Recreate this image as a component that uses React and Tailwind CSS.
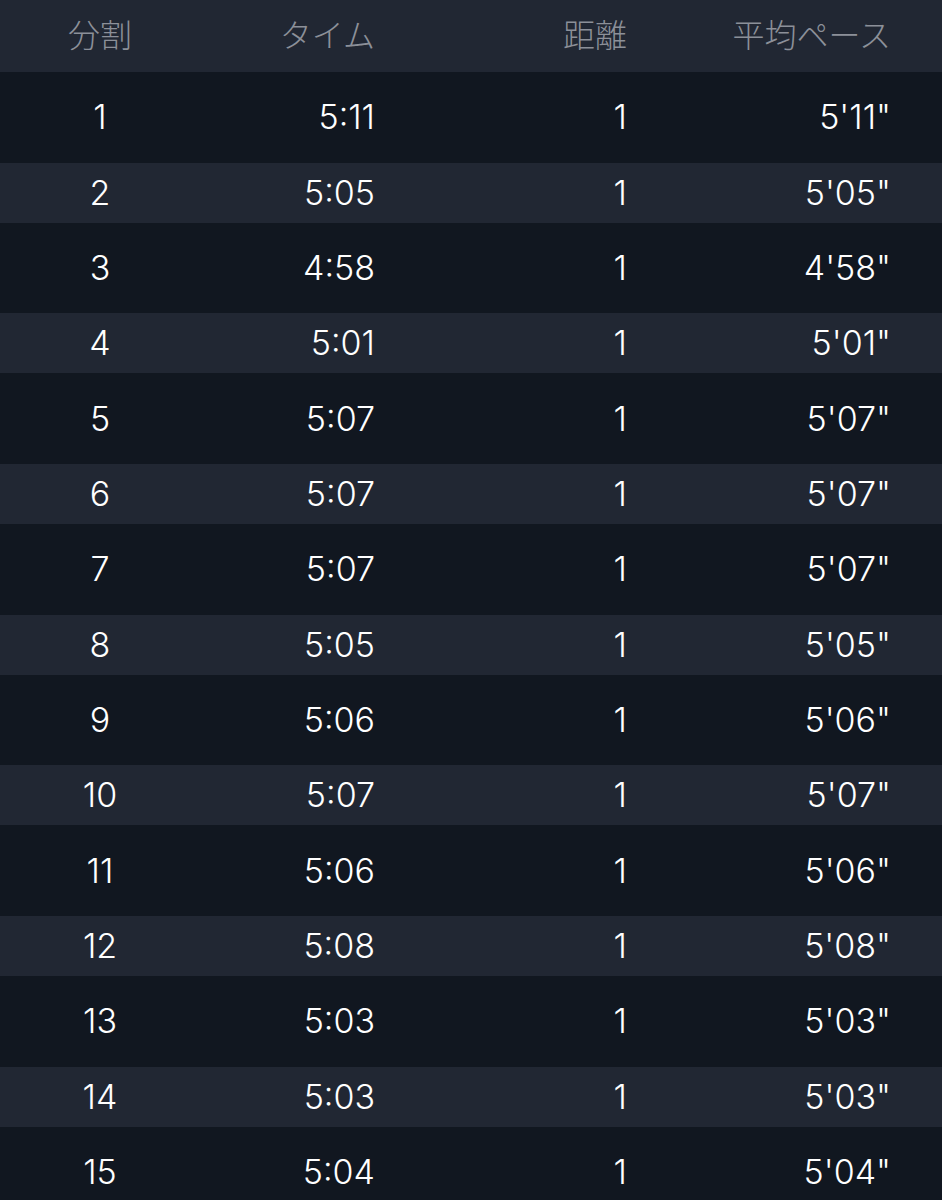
import React from 'react';

const splits = [
  ['1', '5:11', '1', "5'11\""],
  ['2', '5:05', '1', "5'05\""],
  ['3', '4:58', '1', "4'58\""],
  ['4', '5:01', '1', "5'01\""],
  ['5', '5:07', '1', "5'07\""],
  ['6', '5:07', '1', "5'07\""],
  ['7', '5:07', '1', "5'07\""],
  ['8', '5:05', '1', "5'05\""],
  ['9', '5:06', '1', "5'06\""],
  ['10', '5:07', '1', "5'07\""],
  ['11', '5:06', '1', "5'06\""],
  ['12', '5:08', '1', "5'08\""],
  ['13', '5:03', '1', "5'03\""],
  ['14', '5:03', '1', "5'03\""],
  ['15', '5:04', '1', "5'04\""],
];

function Cells({ cells }) {
  return (
    <>
      <div className="w-[200px] text-center">{cells[0]}</div>
      <div className="w-[175px] text-right">{cells[1]}</div>
      <div className="w-[252px] text-right">{cells[2]}</div>
      <div className="w-[264px] text-right">{cells[3]}</div>
    </>
  );
}

export default function App() {
  return (
    <div className="w-[942px] h-[1200px] overflow-hidden bg-[#111720]">
      {/* header */}
      <div className="h-[72px] flex items-center bg-[#212733] text-[32px] font-light text-[#8c9099] leading-none font-['Liberation_Sans','Noto_Sans_CJK_JP',sans-serif]">
        <Cells cells={['分割', 'タイム', '距離', '平均ペース']} />
      </div>

      {/* rows */}
      {splits.map((row, i) => (
        <div
          key={row[0]}
          className={`flex items-center text-[34px] font-light text-white leading-none font-['Inter','Liberation_Sans',sans-serif] ${
            i % 2 === 0 ? 'h-[90.5px] bg-[#111720]' : 'h-[60.2px] bg-[#212733]'
          }`}
        >
          <Cells cells={row} />
        </div>
      ))}
    </div>
  );
}
